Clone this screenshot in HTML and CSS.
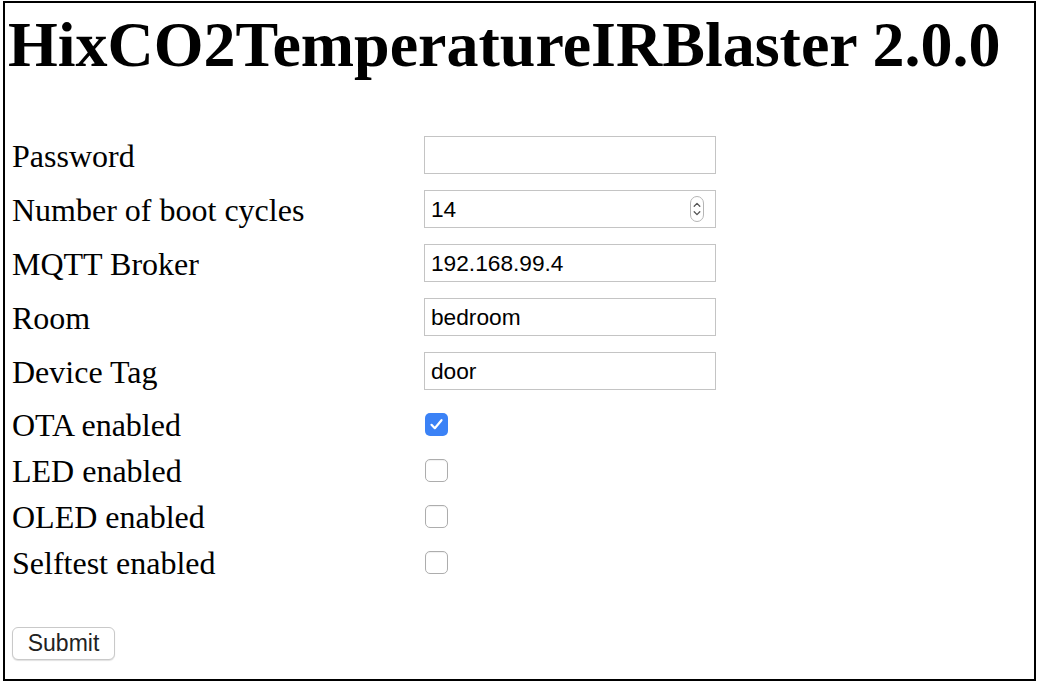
FILE: index.html
```html
<!DOCTYPE html>
<html>
<head>
<meta charset="utf-8">
<link rel="stylesheet" href="styles.css">
</head>
<body>
<div class="frame">
  <h1 class="title">HixCO2TemperatureIRBlaster 2.0.0</h1>
  <form class="form">
    <div class="row">
      <label class="label">Password</label>
      <div class="field"><input class="text" type="text" value=""></div>
    </div>
    <div class="row">
      <label class="label">Number of boot cycles</label>
      <div class="field">
        <input class="text" type="text" value="14">
        <span class="spinner">
          <svg width="14" height="26" viewBox="0 0 14 26">
            <rect x="0.5" y="0.5" width="13" height="25" rx="6.5" fill="#fff" stroke="#b5b5b5"/>
            <path d="M4.2 10.2 L7 7.4 L9.8 10.2" fill="none" stroke="#555" stroke-width="1.3" stroke-linecap="round" stroke-linejoin="round"/>
            <path d="M4.2 15.8 L7 18.6 L9.8 15.8" fill="none" stroke="#555" stroke-width="1.3" stroke-linecap="round" stroke-linejoin="round"/>
          </svg>
        </span>
      </div>
    </div>
    <div class="row">
      <label class="label">MQTT Broker</label>
      <div class="field"><input class="text" type="text" value="192.168.99.4"></div>
    </div>
    <div class="row">
      <label class="label">Room</label>
      <div class="field"><input class="text" type="text" value="bedroom"></div>
    </div>
    <div class="row">
      <label class="label">Device Tag</label>
      <div class="field"><input class="text" type="text" value="door"></div>
    </div>
    <div class="row cb first">
      <label class="label">OTA enabled</label>
      <div class="field">
        <span class="check on">
          <svg width="23" height="23" viewBox="0 0 23 23"><path d="M6.5 11.8 L9.8 15.2 L16.5 7.2" fill="none" stroke="#fff" stroke-width="2.2" stroke-linecap="round" stroke-linejoin="round"/></svg>
        </span>
      </div>
    </div>
    <div class="row cb">
      <label class="label">LED enabled</label>
      <div class="field"><span class="check"></span></div>
    </div>
    <div class="row cb">
      <label class="label">OLED enabled</label>
      <div class="field"><span class="check"></span></div>
    </div>
    <div class="row cb">
      <label class="label">Selftest enabled</label>
      <div class="field"><span class="check"></span></div>
    </div>
    <div class="actions">
      <button class="submit" type="button">Submit</button>
    </div>
  </form>
</div>
</body>
</html>
```

FILE: styles.css
```css
html, body {
  margin: 0;
  padding: 0;
  background: #fff;
}

.frame {
  margin: 1px 0 0 3px;
  width: 1029px;
  height: 676px;
  border: 2px solid #000;
  padding: 0;
  box-sizing: content-box;
  font-family: "Liberation Serif", "Times New Roman", serif;
  color: #000;
}

.title {
  margin: 0;
  padding: 5px 0 0 3px;
  font-size: 64px;
  font-weight: bold;
  line-height: 74px;
  height: 115px;
  box-sizing: border-box;
}

.form {
  margin: 0;
  padding: 10px 0 0 7px;
  display: flex;
  flex-direction: column;
}

.row {
  display: flex;
  align-items: center;
  height: 54px;
}

.row.cb {
  height: 46px;
}

.row.cb.first {
  margin-top: 3px;
}

.label {
  width: 412px;
  font-size: 32px;
  line-height: 34px;
  padding-top: 1px;
}

.field {
  position: relative;
  display: flex;
  align-items: center;
}

.text {
  -webkit-appearance: none;
  appearance: none;
  width: 292px;
  height: 38px;
  box-sizing: border-box;
  margin: 0;
  border: 1px solid #c4c4c4;
  border-radius: 0;
  padding: 0 6px;
  font-family: "Liberation Sans", Arial, sans-serif;
  font-size: 22.7px;
  color: #000;
  background: #fff;
  outline: none;
}

.spinner {
  position: absolute;
  left: 266px;
  top: 6px;
  display: block;
  line-height: 0;
}

.check {
  display: flex;
  align-items: center;
  justify-content: center;
  width: 23px;
  height: 23px;
  box-sizing: border-box;
  margin-left: 1px;
  border: 1px solid #adadad;
  border-radius: 5px;
  background: #fff;
  box-shadow: inset 0 1px 1px rgba(0,0,0,0.06);
}

.check.on {
  border: none;
  background: #3b82f6;
  box-shadow: none;
}

.check.on svg {
  display: block;
}

.actions {
  margin-top: 42px;
}

.submit {
  width: 103px;
  height: 33px;
  margin: 0;
  padding: 0;
  border: 1px solid #c9c9c9;
  border-radius: 6px;
  background: #fff;
  box-shadow: 0 1px 1px rgba(0,0,0,0.12);
  font-family: "Liberation Sans", Arial, sans-serif;
  font-size: 23px;
  color: #222;
}
```
